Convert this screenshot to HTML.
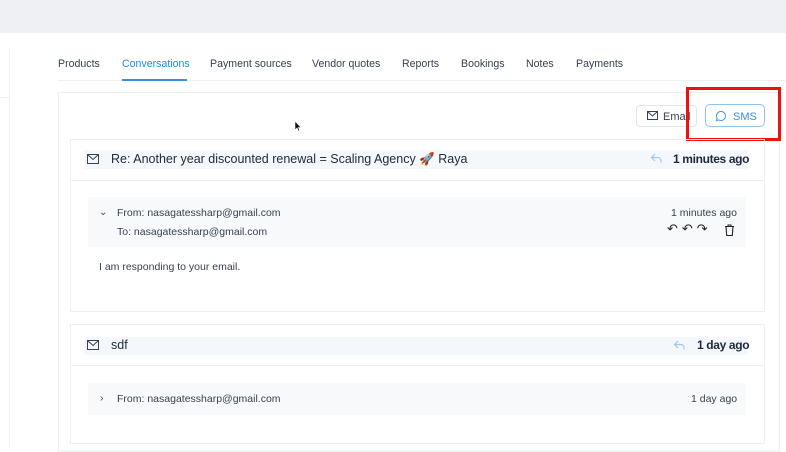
<!DOCTYPE html>
<html><head><style>
*{box-sizing:border-box;margin:0;padding:0}
body{width:786px;height:439px;overflow:hidden;background:#fff;font-family:"Liberation Sans",sans-serif;color:#1f2937;position:relative}
.a{position:absolute}
.t{font-size:10.6px;color:#374151;top:58px}
svg{position:absolute}
.b{font-size:12px;font-weight:bold;letter-spacing:-.35px;color:#1f2937}
</style></head><body>
<div class="a" style="left:0;top:0;width:786px;height:33px;background:#eef0f4"></div>
<div class="a" style="left:-2px;top:48px;width:12px;height:400px;border-right:1px solid #eceef1"></div>
<div class="a" style="left:0;top:97px;width:10px;border-top:1px solid #eceef1"></div>
<div class="a t" style="left:58px">Products</div>
<div class="a t" style="left:122px;color:#1a8ce0">Conversations</div>
<div class="a t" style="left:210px">Payment sources</div>
<div class="a t" style="left:312px">Vendor quotes</div>
<div class="a t" style="left:402px">Reports</div>
<div class="a t" style="left:461px">Bookings</div>
<div class="a t" style="left:526px">Notes</div>
<div class="a t" style="left:576px">Payments</div>
<div class="a" style="left:58px;top:80px;width:728px;border-top:1px solid #f0f1f3"></div>
<div class="a" style="left:122px;top:79px;width:65px;height:2px;background:#3b8fe0"></div>
<div class="a" style="left:58px;top:92px;width:722px;height:360px;border:1px solid #eceef1"></div>
<div class="a" style="left:636px;top:105px;width:61px;height:22px;border:1px solid #e2e5e9;border-radius:4px;font-size:11px;padding:5px 0 0 26px;color:#374151">Email</div>
<svg style="left:647px;top:111px" width="11" height="9" viewBox="0 0 11 9"><rect x="0.5" y="0.5" width="10" height="8" fill="none" stroke="#374151"/><path d="M0.5 0.5L5.5 5L10.5 0.5" fill="none" stroke="#374151"/></svg>
<div class="a" style="left:705px;top:104px;width:60px;height:23px;border:1px solid #8fc3ef;border-radius:5px;font-size:11px;padding:6px 0 0 27px;color:#3a8fdc">SMS</div>
<svg style="left:715px;top:110px" width="12" height="12" viewBox="0 0 12 12"><path d="M6 1.5a4.5 4.5 0 1 1-2.3 8.4L1.5 10.5l.6-2.2A4.5 4.5 0 0 1 6 1.5z" fill="none" stroke="#3a8fdc" stroke-width=".9"/></svg>
<div class="a" style="left:686px;top:87px;width:95px;height:54px;border:3px solid #ee1111"></div>
<div class="a" style="left:70px;top:139px;width:695px;height:173px;border:1px solid #eceef1"></div>
<div class="a" style="left:84px;top:150px;width:664px;height:19px;background:#f4f8fc"></div>
<svg style="left:87px;top:154px" width="12" height="10" viewBox="0 0 12 10"><rect x="0.5" y="0.5" width="11" height="9" fill="none" stroke="#374151"/><path d="M0.5 0.5L6 5.5L11.5 0.5" fill="none" stroke="#374151"/></svg>
<div class="a" style="left:111px;top:152px;font-size:12.5px;color:#1f2937">Re: Another year discounted renewal = Scaling Agency 🚀 Raya</div>
<svg style="left:650px;top:153px" width="12" height="10" viewBox="0 0 12 10"><path d="M5 1L1.5 4.5L5 8M1.5 4.5H8a3 3 0 0 1 3 3v2" fill="none" stroke="#9cc9ee" stroke-width="1.2"/></svg>
<div class="a b" style="left:673px;top:152px">1 minutes ago</div>
<div class="a" style="left:71px;top:180px;width:693px;border-top:1px solid #eceef1"></div>
<div class="a" style="left:88px;top:197px;width:658px;height:50px;background:#f8f9fa"></div>
<div class="a" style="left:99px;top:207px;font-size:10px;color:#444">&#8964;</div>
<div class="a" style="left:117px;top:207px;font-size:10.5px;color:#374151">From: nasagatessharp@gmail.com</div>
<div class="a" style="left:117px;top:226px;font-size:10.5px;color:#374151">To: nasagatessharp@gmail.com</div>
<div class="a" style="left:671px;top:207px;font-size:10.5px;color:#374151">1 minutes ago</div>
<div class="a" style="left:667px;top:221px;font-size:13px;color:#222;letter-spacing:4px">↶↶↷</div>
<svg style="left:724px;top:224px" width="11" height="12" viewBox="0 0 11 12"><path d="M1 2.5h9M4 2.5V1h3v1.5M2 2.5l.7 9h5.6l.7-9" fill="none" stroke="#222" stroke-width="1.1"/></svg>
<div class="a" style="left:99px;top:261px;font-size:10.5px;color:#374151">I am responding to your email.</div>
<div class="a" style="left:70px;top:324px;width:695px;height:120px;border:1px solid #eceef1"></div>
<div class="a" style="left:84px;top:337px;width:664px;height:18px;background:#f4f8fc"></div>
<svg style="left:87px;top:340px" width="12" height="10" viewBox="0 0 12 10"><rect x="0.5" y="0.5" width="11" height="9" fill="none" stroke="#374151"/><path d="M0.5 0.5L6 5.5L11.5 0.5" fill="none" stroke="#374151"/></svg>
<div class="a" style="left:111px;top:338px;font-size:12.5px">sdf</div>
<svg style="left:673px;top:340px" width="12" height="10" viewBox="0 0 12 10"><path d="M5 1L1.5 4.5L5 8M1.5 4.5H8a3 3 0 0 1 3 3v2" fill="none" stroke="#9cc9ee" stroke-width="1.2"/></svg>
<div class="a b" style="left:697px;top:338px">1 day ago</div>
<div class="a" style="left:71px;top:365px;width:693px;border-top:1px solid #eceef1"></div>
<div class="a" style="left:88px;top:383px;width:658px;height:32px;background:#f8f9fa"></div>
<div class="a" style="left:100px;top:392px;font-size:10.5px;color:#444">›</div>
<div class="a" style="left:117px;top:393px;font-size:10.5px;color:#374151">From: nasagatessharp@gmail.com</div>
<div class="a" style="left:691px;top:393px;font-size:10.5px;color:#374151">1 day ago</div>
<svg style="left:294px;top:120px" width="8" height="12" viewBox="0 0 8 12"><path d="M1 1v9l2-2 1.5 3 1.2-.6L4.3 7.5H7z" fill="#111" stroke="#fff" stroke-width=".6"/></svg>
</body></html>
